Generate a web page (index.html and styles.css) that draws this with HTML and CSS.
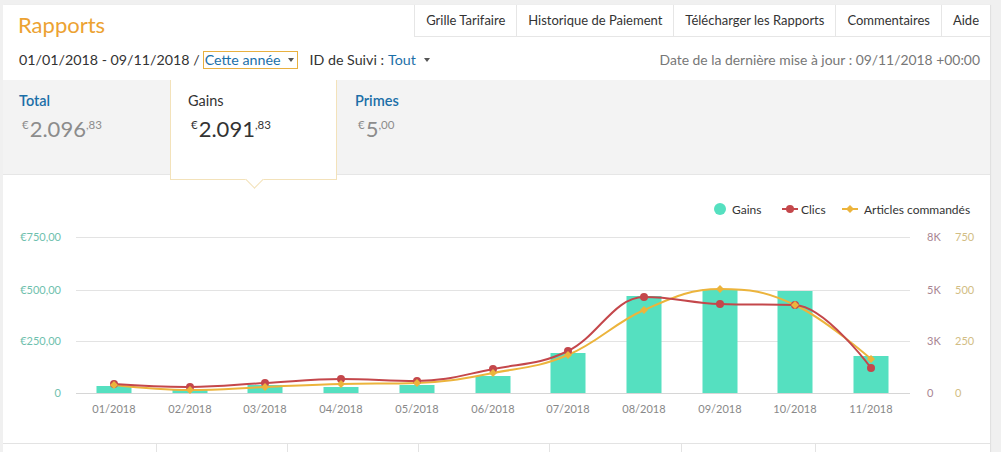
FILE: index.html
```html
<!DOCTYPE html>
<html lang="fr">
<head>
<meta charset="utf-8">
<title>Rapports</title>
<link rel="stylesheet" href="styles.css">
</head>
<body>
<div class="card">
  <header class="head">
    <h1 class="title">Rapports</h1>
    <nav class="tabs">
      <a class="tab">Grille Tarifaire</a>
      <a class="tab">Historique de Paiement</a>
      <a class="tab">Télécharger les Rapports</a>
      <a class="tab">Commentaires</a>
      <a class="tab">Aide</a>
    </nav>
  </header>

  <div class="filters">
    <div class="range">
      <span>01/01/2018 - 09/11/2018 /</span>
      <span class="select focused"><span class="link">Cette année</span><span class="caret"></span></span>
      <span class="tracking">ID de Suivi : <span class="link">Tout</span><span class="caret"></span></span>
    </div>
    <div class="updated">Date de la dernière mise à jour : 09/11/2018 +00:00</div>
  </div>

  <section class="summary">
    <div class="stat">
      <div class="stat-label">Total</div>
      <div class="stat-value"><sup class="cur">€</sup>2.096<sup>,83</sup></div>
    </div>
    <div class="stat active">
      <div class="stat-label">Gains</div>
      <div class="stat-value"><sup class="cur">€</sup>2.091<sup>,83</sup></div>
    </div>
    <div class="stat">
      <div class="stat-label">Primes</div>
      <div class="stat-value"><sup class="cur">€</sup>5<sup>,00</sup></div>
    </div>
  </section>

  <section class="chart">
    <svg width="987" height="268" viewBox="3 175 987 268" xmlns="http://www.w3.org/2000/svg">
      <g class="legend">
        <circle cx="720" cy="209" r="6" fill="#55e0c0"/>
        <text x="732" y="213.5">Gains</text>
        <line x1="782" y1="209" x2="798" y2="209" stroke="#c4474b" stroke-width="2"/>
        <circle cx="790" cy="209" r="4" fill="#c4474b"/>
        <text x="801" y="213.5">Clics</text>
        <line x1="842" y1="209" x2="858" y2="209" stroke="#ecb43c" stroke-width="2"/>
        <polygon points="850,205 854,209 850,213 846,209" fill="#ecb43c"/>
        <text x="864" y="213.5">Articles commandés</text>
      </g>

      <g stroke="#e3e3e3" stroke-width="1">
        <line x1="76" y1="237.5" x2="910" y2="237.5"/>
        <line x1="76" y1="290.5" x2="910" y2="290.5"/>
        <line x1="76" y1="341.5" x2="910" y2="341.5"/>
        <line x1="76" y1="393.5" x2="910" y2="393.5" stroke="#d6d6d6"/>
      </g>

      <g class="axis-left" text-anchor="end">
        <text x="61" y="241">€750,00</text>
        <text x="61" y="294">€500,00</text>
        <text x="61" y="345">€250,00</text>
        <text x="61" y="397">0</text>
      </g>
      <g class="axis-clics">
        <text x="927" y="241">8K</text>
        <text x="927" y="294">5K</text>
        <text x="927" y="345">3K</text>
        <text x="927" y="397">0</text>
      </g>
      <g class="axis-articles">
        <text x="955" y="241">750</text>
        <text x="955" y="294">500</text>
        <text x="955" y="345">250</text>
        <text x="955" y="397">0</text>
      </g>

      <g fill="#55e0c0">
        <rect x="96.5" y="386" width="35" height="7"/>
        <rect x="172.5" y="390" width="35" height="3"/>
        <rect x="247.5" y="385" width="35" height="8"/>
        <rect x="323.5" y="387" width="35" height="6"/>
        <rect x="399.5" y="385" width="35" height="8"/>
        <rect x="475.5" y="376" width="35" height="17"/>
        <rect x="550.5" y="353" width="35" height="40"/>
        <rect x="626.5" y="296" width="35" height="97"/>
        <rect x="702.5" y="289" width="35" height="104"/>
        <rect x="777.5" y="291" width="35" height="102"/>
        <rect x="853.5" y="356" width="35" height="37"/>
      </g>

      <g class="axis-x" text-anchor="middle">
        <text x="114" y="413">01/2018</text>
        <text x="190" y="413">02/2018</text>
        <text x="265" y="413">03/2018</text>
        <text x="341" y="413">04/2018</text>
        <text x="417" y="413">05/2018</text>
        <text x="493" y="413">06/2018</text>
        <text x="568" y="413">07/2018</text>
        <text x="644" y="413">08/2018</text>
        <text x="720" y="413">09/2018</text>
        <text x="795" y="413">10/2018</text>
        <text x="871" y="413">11/2018</text>
      </g>

      <path fill="none" stroke="#ecb43c" stroke-width="2" d="M114 385 C114,385 160,390 190,390 C220,390 235,388.2 265,387 C295,385.8 311,384.8 341,384 C371,383.2 387,384 417,383 C447,382 463,378.5 493,373 C523,367.5 538,367.5 568,355 C598,342.5 614,323.1 644,310 C674,296.9 690,289 720,289 C750,289 765,291.1 795,305 C825,318.9 871,359 871,359"/>
      <path fill="none" stroke="#c4474b" stroke-width="2" d="M114 384 C114,384 160,387.2 190,387 C220,386.8 235,384.6 265,383 C295,381.4 311,379 341,379 C371,379 387,381 417,381 C447,381 463,374.9 493,369 C523,363.1 538,365.3 568,351 C598,336.7 614,297 644,297 C674,297 690,303 720,304 C750,305 765,304 795,305 C825,306 871,368 871,368"/>

      <g fill="#c4474b">
        <circle cx="114" cy="384" r="4"/>
        <circle cx="190" cy="387" r="4"/>
        <circle cx="265" cy="383" r="4"/>
        <circle cx="341" cy="379" r="4"/>
        <circle cx="417" cy="381" r="4"/>
        <circle cx="493" cy="369" r="4"/>
        <circle cx="568" cy="351" r="4"/>
        <circle cx="644" cy="297" r="4"/>
        <circle cx="720" cy="304" r="4"/>
        <circle cx="795" cy="305" r="4"/>
        <circle cx="871" cy="368" r="4"/>
      </g>
      <g fill="#ecb43c">
        <polygon points="114,381 118,385 114,389 110,385"/>
        <polygon points="190,386 194,390 190,394 186,390"/>
        <polygon points="265,383 269,387 265,391 261,387"/>
        <polygon points="341,380 345,384 341,388 337,384"/>
        <polygon points="417,379 421,383 417,387 413,383"/>
        <polygon points="493,369 497,373 493,377 489,373"/>
        <polygon points="568,351 572,355 568,359 564,355"/>
        <polygon points="644,306 648,310 644,314 640,310"/>
        <polygon points="720,285 724,289 720,293 716,289"/>
        <polygon points="795,301 799,305 795,309 791,305"/>
        <polygon points="871,355 875,359 871,363 867,359"/>
      </g>
    </svg>
  </section>

  <div class="table-head">
    <div class="th"></div>
    <div class="th"></div>
    <div class="th"></div>
    <div class="th"></div>
    <div class="th"></div>
    <div class="th"></div>
    <div class="th"></div>
  </div>
</div>
</body>
</html>
```

FILE: styles.css
```css
* { box-sizing: border-box; }

html, body {
  margin: 0;
  padding: 0;
  height: 100%;
}

body {
  background: #f0f0f0;
  font-family: "Lato", "Noto Sans", "Liberation Sans", sans-serif;
  color: #333;
  overflow: hidden;
}

.card {
  margin: 5px 11px 0 3px;
  background: #fff;
  box-shadow: 1px 0 1px rgba(0, 0, 0, 0.06);
  min-height: 460px;
}

.head {
  display: flex;
  justify-content: space-between;
  align-items: flex-start;
  height: 32px;
}

.title {
  margin: 0;
  padding: 8px 0 0 15px;
  font-size: 22px;
  line-height: 24px;
  font-weight: 400;
  color: #eca232;
}

.tabs {
  display: flex;
  height: 32px;
}

.tab {
  display: block;
  height: 32px;
  line-height: 31px;
  padding: 0 11px;
  font-size: 13px;
  color: #333;
  border-left: 1px solid #e6e6e6;
  border-bottom: 1px solid #e6e6e6;
  white-space: nowrap;
}

.filters {
  display: flex;
  justify-content: space-between;
  align-items: center;
  height: 43px;
  padding: 2px 10px 0 16px;
  font-size: 14.25px;
}

.range {
  display: flex;
  align-items: center;
  gap: 3px;
}

.link { color: #1b6fa8; }

.select {
  display: inline-flex;
  align-items: center;
  height: 18px;
  padding: 0 3px 0 1px;
  border: 1px solid #e8b040;
}

.caret {
  display: inline-block;
  width: 0;
  height: 0;
  margin-left: 8px;
  border-left: 3.5px solid transparent;
  border-right: 3.5px solid transparent;
  border-top: 4px solid #555;
}

.tracking {
  margin-left: 8px;
  display: inline-flex;
  align-items: center;
}

.tracking .link { margin-left: 4px; }

.updated {
  color: #777;
  font-size: 13.9px;
}

.summary {
  display: flex;
  height: 95px;
  background: #f3f3f3;
  border-bottom: 1px solid #e6e6e6;
}

.stat {
  width: 167px;
  padding: 12px 16px;
}

.stat-label {
  font-size: 14.5px;
  line-height: 17px;
  color: #1b6fa8;
  font-weight: 600;
}

.stat-value {
  margin-top: 8px;
  font-size: 22px;
  line-height: 24px;
  color: #8c8c8c;
  padding-left: 3px;
}

.stat-value sup {
  font-size: 11.5px;
  vertical-align: 8px;
  line-height: 0;
}

.stat-value sup.cur {
  margin-right: 1px;
}

.stat.active {
  position: relative;
  z-index: 1;
  height: 100px;
  margin-bottom: -5px;
  padding-left: 17px;
  background: #fff;
  border: 1px solid #f3e2ba;
  border-top: none;
}

.stat.active::after {
  content: "";
  position: absolute;
  left: 77px;
  bottom: -7px;
  width: 12px;
  height: 12px;
  background: #fff;
  border-right: 1px solid #f3e2ba;
  border-bottom: 1px solid #f3e2ba;
  transform: rotate(45deg);
}

.stat.active .stat-label {
  color: #333;
  font-weight: 400;
}

.stat.active .stat-value {
  color: #333;
}

.stat:last-child {
  padding-left: 18px;
}

.chart {
  height: 268px;
}

.chart svg {
  display: block;
  font-family: "Lato", "Noto Sans", "Liberation Sans", sans-serif;
}

.legend text {
  font-size: 12px;
  fill: #333;
}

.axis-left text {
  font-size: 11px;
  fill: #6fbfae;
}

.axis-clics text {
  font-size: 11px;
  fill: #a88592;
}

.axis-articles text {
  font-size: 11px;
  fill: #d2bd84;
}

.axis-x text {
  font-size: 11px;
  fill: #888;
}

.table-head {
  display: grid;
  grid-template-columns: 153px 131px 131px 131px 132px 134px 1fr;
  height: 30px;
  border-top: 1px solid #e3e3e3;
}

.th {
  border-left: 1px solid #e3e3e3;
}

.th:first-child {
  border-left: none;
}
```
